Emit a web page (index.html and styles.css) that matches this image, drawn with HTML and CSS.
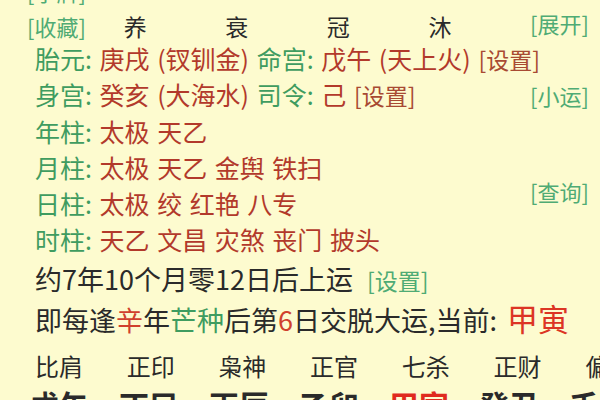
FILE: index.html
```html
<!DOCTYPE html>
<html lang="zh">
<head>
<meta charset="utf-8">
<title>排盘</title>
<link rel="stylesheet" href="styles.css">
</head>
<body>
<div class="page">
  <div class="top">
    <div class="main">
      <div class="row0 btn">[字牌]</div>
      <div class="head">
        <span class="cell first btn">[收藏]</span>
        <span class="cell">养</span>
        <span class="cell">衰</span>
        <span class="cell">冠</span>
        <span class="cell">沐</span>
      </div>
      <div class="line"><span class="lab">胎元:</span> <span class="red">庚戌 (钗钏金)</span> <span class="lab">命宫:</span> <span class="red">戊午 (天上火)</span> <span class="set">[设置]</span></div>
      <div class="line"><span class="lab">身宫:</span> <span class="red">癸亥 (大海水)</span> <span class="lab">司令:</span> <span class="red">己</span> <span class="set">[设置]</span></div>
      <div class="line"><span class="lab">年柱:</span> <span class="red">太极 天乙</span></div>
      <div class="line"><span class="lab">月柱:</span> <span class="red">太极 天乙 金舆 铁扫</span></div>
      <div class="line"><span class="lab">日柱:</span> <span class="red">太极 绞 红艳 八专</span></div>
      <div class="line"><span class="lab">时柱:</span> <span class="red">天乙 文昌 灾煞 丧门 披头</span></div>
    </div>
    <div class="side">
      <span class="btn s1">[展开]</span>
      <span class="btn s2">[小运]</span>
      <span class="btn s3">[查询]</span>
    </div>
  </div>
  <div class="yun">约7年10个月零12日后上运 <span class="btn small">[设置]</span></div>
  <div class="yun">即每逢<span class="hl">辛</span>年<span class="lab">芒种</span>后第<span class="hl">6</span>日交脱大运,当前: <span class="cur">甲寅</span></div>
  <div class="gods">
    <span>比肩</span><span>正印</span><span>枭神</span><span>正官</span><span>七杀</span><span>正财</span><span>偏财</span>
  </div>
  <div class="pillars">
    <span>戊午</span><span>丁巳</span><span>丙辰</span><span>乙卯</span><span class="now">甲寅</span><span>癸丑</span><span>壬子</span>
  </div>
</div>
</body>
</html>
```

FILE: styles.css
```css
html, body {
  margin: 0;
  padding: 0;
  background: #fdfbcf;
  overflow: hidden;
  width: 600px;
  height: 400px;
}
body {
  font-family: "Noto Sans CJK SC", "Noto Sans", sans-serif;
  color: #2a2a2a;
}
.page {
  margin-top: -27px;
}
.top {
  display: grid;
  grid-template-columns: minmax(0, 1fr) 70px;
}
.main {
  padding-left: 27px;
}
.btn {
  color: #4fab74;
  font-size: 22px;
}
.row0 {
  height: 39px;
  line-height: 36px;
}
.head {
  display: flex;
  height: 28px;
  line-height: 28px;
  font-size: 23px;
}
.head .cell {
  width: 105px;
}
.head .cell.first {
  width: 100px;
}
.line {
  padding-left: 8px;
  font-size: 25px;
  line-height: 36.3px;
  height: 36.3px;
  white-space: nowrap;
  word-spacing: 2px;
}
.lab {
  color: #3f9c60;
}
.red {
  color: #b2392b;
}
.set {
  color: #a84a33;
  font-size: 23px;
}
.side {
  display: flex;
  flex-direction: column;
  align-items: flex-start;
  padding-top: 35px;
}
.side .btn {
  line-height: 30px;
  white-space: nowrap;
}
.s2 {
  margin-top: 42px;
}
.s3 {
  margin-top: 66px;
}
.yun {
  padding-left: 35px;
  font-size: 27px;
  line-height: 41px;
  height: 41px;
  white-space: nowrap;
}
.yun:first-of-type {
  margin-top: 2.5px;
}
.yun .small {
  font-size: 23px;
  margin-left: 8px;
}
.hl {
  color: #d0412d;
}
.cur {
  color: #dc3524;
  font-size: 31px;
  line-height: 30px;
  margin-left: 4px;
}
.gods {
  display: grid;
  grid-template-columns: repeat(7, 91.7px);
  padding-left: 35px;
  margin-top: 4px;
  font-size: 24px;
  line-height: 44px;
  height: 44px;
  white-space: nowrap;
}
.pillars {
  display: grid;
  grid-template-columns: repeat(7, 90px);
  padding-left: 29px;
  font-size: 30px;
  font-weight: bold;
  line-height: 32px;
  white-space: nowrap;
}
.pillars .now {
  color: #e02a1e;
}
```
